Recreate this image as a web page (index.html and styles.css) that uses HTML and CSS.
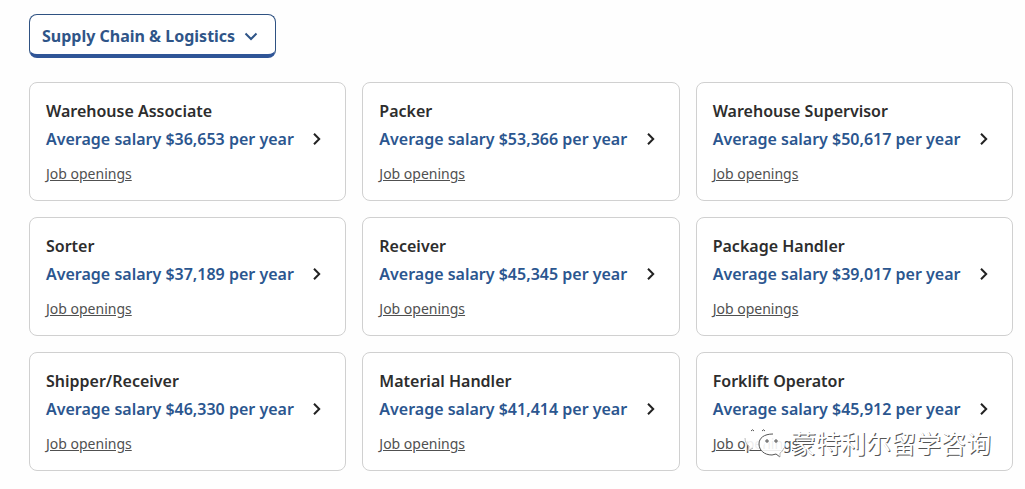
FILE: index.html
```html
<!DOCTYPE html>
<html lang="en">

<head>
    <meta charset="UTF-8">
    <meta name="viewport" content="width=device-width, initial-scale=1.0">
    <title>Salaries by category</title>
    <link rel="stylesheet" href="styles.css">
</head>

<body>
    <svg class="sprite" aria-hidden="true">
        <symbol id="chevron-right" viewBox="0 0 24 24">
            <path d="M9 6.8 L14.2 12 L9 17.2" />
        </symbol>
    </svg>

    <main class="page">
        <button type="button" class="category-btn" aria-haspopup="listbox">
            Supply Chain &amp; Logistics
            <svg class="icon" viewBox="0 0 24 24" aria-hidden="true"><path d="M6.5 9.5 L12 15 L17.5 9.5" /></svg>
        </button>

        <div class="cards">
            <section class="card">
                <h2 class="title">Warehouse Associate</h2>
                <a class="salary" href="#">Average salary $36,653 per year <svg class="icon"><use href="#chevron-right" /></svg></a>
                <a class="openings" href="#">Job openings</a>
            </section>
            <section class="card">
                <h2 class="title">Packer</h2>
                <a class="salary" href="#">Average salary $53,366 per year <svg class="icon"><use href="#chevron-right" /></svg></a>
                <a class="openings" href="#">Job openings</a>
            </section>
            <section class="card">
                <h2 class="title">Warehouse Supervisor</h2>
                <a class="salary" href="#">Average salary $50,617 per year <svg class="icon"><use href="#chevron-right" /></svg></a>
                <a class="openings" href="#">Job openings</a>
            </section>
            <section class="card">
                <h2 class="title">Sorter</h2>
                <a class="salary" href="#">Average salary $37,189 per year <svg class="icon"><use href="#chevron-right" /></svg></a>
                <a class="openings" href="#">Job openings</a>
            </section>
            <section class="card">
                <h2 class="title">Receiver</h2>
                <a class="salary" href="#">Average salary $45,345 per year <svg class="icon"><use href="#chevron-right" /></svg></a>
                <a class="openings" href="#">Job openings</a>
            </section>
            <section class="card">
                <h2 class="title">Package Handler</h2>
                <a class="salary" href="#">Average salary $39,017 per year <svg class="icon"><use href="#chevron-right" /></svg></a>
                <a class="openings" href="#">Job openings</a>
            </section>
            <section class="card">
                <h2 class="title">Shipper/Receiver</h2>
                <a class="salary" href="#">Average salary $46,330 per year <svg class="icon"><use href="#chevron-right" /></svg></a>
                <a class="openings" href="#">Job openings</a>
            </section>
            <section class="card">
                <h2 class="title">Material Handler</h2>
                <a class="salary" href="#">Average salary $41,414 per year <svg class="icon"><use href="#chevron-right" /></svg></a>
                <a class="openings" href="#">Job openings</a>
            </section>
            <section class="card">
                <h2 class="title">Forklift Operator</h2>
                <a class="salary" href="#">Average salary $45,912 per year <svg class="icon"><use href="#chevron-right" /></svg></a>
                <a class="openings" href="#">Job openings</a>
                <div class="watermark" lang="zh-CN">
                    <svg class="bubbles" viewBox="0 0 48 36" aria-hidden="true">
                        <path class="bubble" d="M15 1 C7 1 2 7 2 13 C2 18 4 21 6 22 L5 27 L10 24 C12 25 14 25 17 25 L29 11 C27 5 22 1 15 1 Z" />
                        <path class="edge faint" d="M2 14 C2 18 4 21 6 22 L5 27 L10 24" />
                        <path class="edge" d="M8 7 Q9.5 4.5 11 7 M19 7 Q20.500 4.500 22 7" />
                        <path class="bubble" d="M29 10 C21 10 16 14 16 20 C16 26 21 31 29 31 L33 30 L38 33 L37 29 C40 27 42 24 42 20 C42 14 37 10 29 10 Z" />
                        <path class="edge" d="M30 10 C21 10 16 14 16 20 C16 26 21 31 29 31 L33 30 L37 33" />
                        <path class="edge faint" d="M37 33 V29 C39 28 40 26 41 24" />
                        <path class="edge" d="M22 17 H26 M24 15 V19 M31 17 H35 M33 15 V19" />
                    </svg>
                    <span>蒙特利尔留学咨询</span>
                </div>
            </section>
        </div>
    </main>
</body>

</html>
```
FILE: styles.css
```css
* {
    box-sizing: border-box;
    margin: 0;
    padding: 0;
}

body {
    font-family: "Noto Sans", sans-serif;
    background-color: #fefefe;
    color: #2d2d2d;
}

.sprite {
    display: none;
}

.page {
    padding: 14px 12px 18px 29px;
}

.icon {
    width: 24px;
    height: 24px;
    flex: none;
    fill: none;
    stroke: currentColor;
    stroke-width: 2;
}

.category-btn {
    display: flex;
    align-items: center;
    gap: 4px;
    height: 44px;
    padding: 2px 12px 0;
    border: 1px solid #2f5282;
    border-bottom: 4px solid #2f5597;
    border-radius: 8px;
    background-color: #fff;
    color: #2f5588;
    font-family: inherit;
    font-size: 16px;
    font-weight: 700;
    cursor: pointer;
}

.cards {
    display: grid;
    grid-template-columns: repeat(3, 1fr);
    gap: 16px;
    margin-top: 24px;
}

.card {
    position: relative;
    display: flex;
    flex-direction: column;
    align-items: flex-start;
    padding: 16px;
    border: 1px solid #d0d0d0;
    border-radius: 8px;
    background-color: #fff;
}

.title {
    font-size: 16px;
    font-weight: 600;
    line-height: 24px;
}

.salary {
    display: flex;
    justify-content: space-between;
    width: 100%;
    margin-top: 4px;
    color: #2b568f;
    font-size: 16px;
    font-weight: 600;
    line-height: 24px;
    text-decoration: none;
}

.salary .icon {
    color: #222;
}

.openings {
    margin-top: 12px;
    color: #505050;
    font-size: 14px;
    line-height: 21px;
}

/* White lettering, visible by its dark lower-right edge */
.watermark {
    position: absolute;
    right: 21px;
    bottom: 10px;
    display: flex;
    align-items: center;
    color: #fff;
    font-family: "Noto Sans CJK SC", sans-serif;
    font-size: 25px;
    line-height: 36px;
    text-shadow: 1px 1px 0 #555;
    white-space: nowrap;
}

.bubbles {
    width: 48px;
    height: 36px;
}

.bubble {
    fill: #fff;
    fill-opacity: 0.9;
}

.edge {
    fill: none;
    stroke: #555;
}

.faint {
    stroke: #bbb;
}
```
